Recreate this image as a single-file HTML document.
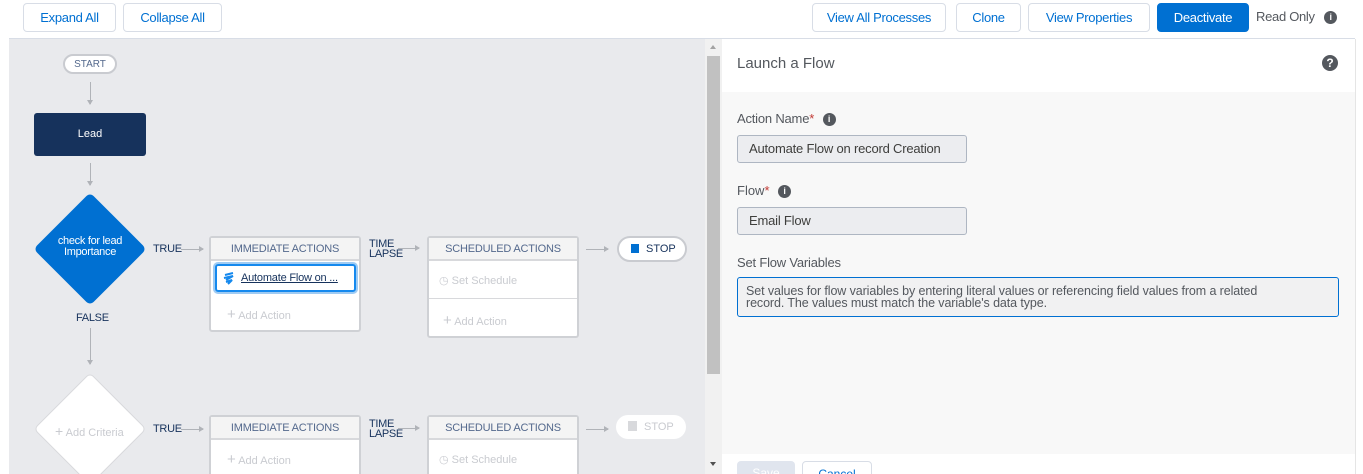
<!DOCTYPE html>
<html style="width:1363px;height:474px;overflow:hidden"><head><meta charset="utf-8"><style>
*{box-sizing:border-box;margin:0;padding:0}
body{width:1363px;height:474px;overflow:hidden;background:#fff;font-family:"Liberation Sans",sans-serif;position:relative;color:#3e3e3c}
.a{position:absolute}
.btn{position:absolute;top:3px;height:29px;border:1px solid #d8dde6;border-radius:4px;background:#fff;color:#0070d2;font-size:13px;line-height:27px;text-align:center;letter-spacing:-0.3px}
.box{position:absolute;background:#fff;border:2px solid #cfd1d5;border-radius:3px}
.hd{height:23px;background:#f4f4f4;border-bottom:2px solid #d8d9dc;color:#54698d;font-size:11px;text-align:center;line-height:22px;letter-spacing:-0.2px}
.lbl{position:absolute;color:#16325c;font-size:11px;letter-spacing:-0.3px}
.arr{position:absolute;height:1px;background:#b0b3b8}
.arr:after{content:"";position:absolute;right:-1px;top:-3px;border-left:5px solid #b0b3b8;border-top:3.5px solid transparent;border-bottom:3.5px solid transparent}
.varr{position:absolute;width:1px;background:#b0b3b8}
.varr:after{content:"";position:absolute;bottom:-1px;left:-3px;border-top:5px solid #b0b3b8;border-left:3.5px solid transparent;border-right:3.5px solid transparent}
.grey{color:#c9cbd0;font-size:11px}
.fld{position:absolute;left:737px;width:230px;height:28px;background:#ecedf0;border:1px solid #aeb6c2;border-radius:3px;font-size:13px;line-height:26px;padding-left:11px;color:#3e3e3c;letter-spacing:-0.2px}
.info{display:inline-block;width:13px;height:13px;border-radius:50%;background:#54585e;color:#fff;font-size:9px;font-weight:bold;text-align:center;line-height:13px;vertical-align:middle}
</style></head><body>
<div class="btn" style="left:23px;width:93px">Expand All</div>
<div class="btn" style="left:123px;width:99px">Collapse All</div>
<div class="btn" style="left:812px;width:134px">View All Processes</div>
<div class="btn" style="left:956px;width:65px">Clone</div>
<div class="btn" style="left:1028px;width:122px">View Properties</div>
<div class="btn" style="left:1157px;width:92px;background:#0070d2;border-color:#0070d2;color:#fff">Deactivate</div>
<div class="a" style="left:1256px;top:9px;font-size:13px;color:#54585e;letter-spacing:-0.3px">Read Only <span class="info" style="margin-left:6px">i</span></div>
<div class="a" style="left:9px;top:38px;width:1346px;height:1px;background:#d8dde6"></div>

<div class="a" style="left:9px;top:39px;width:696px;height:435px;background:#e9eaed"></div>
<div class="a" style="left:705px;top:39px;width:17px;height:435px;background:#f1f1f1"></div>
<div class="a" style="left:707px;top:56px;width:13px;height:318px;background:#c1c1c1"></div>
<div class="a" style="left:710px;top:45px;border-bottom:4px solid #a3a3a3;border-left:3.5px solid transparent;border-right:3.5px solid transparent"></div>
<div class="a" style="left:710px;top:462px;border-top:4px solid #505050;border-left:3.5px solid transparent;border-right:3.5px solid transparent"></div>

<div class="a" style="left:63px;top:54px;width:54px;height:20px;border:2px solid #c9cbd0;background:#fff;border-radius:10px;font-size:10px;color:#54698d;text-align:center;line-height:17px">START</div>
<div class="varr" style="left:90px;top:82px;height:22px"></div>
<div class="a" style="left:34px;top:113px;width:112px;height:43px;background:#16325c;border-radius:3px;color:#fff;font-size:11px;text-align:center;line-height:43px">Lead</div>
<div class="varr" style="left:90px;top:163px;height:22px"></div>

<div class="a" style="left:50px;top:209px;width:80px;height:80px;background:#0070d2;border-radius:5px;transform:rotate(45deg)"></div>
<div class="a" style="left:40px;top:236px;width:100px;text-align:center;color:#fff;font-size:11px;line-height:11px;letter-spacing:-0.3px">check for lead<br>Importance</div>
<div class="lbl" style="left:153px;top:243px">TRUE</div>
<div class="arr" style="left:181px;top:249px;width:22px"></div>
<div class="lbl" style="left:76px;top:312px">FALSE</div>
<div class="varr" style="left:90px;top:328px;height:36px"></div>

<div class="box" style="left:209px;top:236px;width:152px;height:96px">
<div class="hd">IMMEDIATE ACTIONS</div>
<div class="a" style="left:4px;top:26px;width:141px;height:28px;border:2px solid #1589ee;border-radius:3px;box-shadow:0 0 0 2px #9fcbf3;font-size:11px;line-height:24px;padding-left:24px;color:#16325c;letter-spacing:-0.2px"><span style="text-decoration:underline">Automate Flow on ...</span>
<svg class="a" style="left:6px;top:6px" width="12" height="13" viewBox="0 0 12 13"><path d="M2 3 L10 1 M1 6 L10 4 L3 8 M3 10 L9 8 L5 12" stroke="#1589ee" stroke-width="2" fill="none"/></svg></div>
<div class="a grey" style="left:16px;top:68px"><span style="font-size:15px">+</span> Add Action</div>
</div>
<div class="lbl" style="left:369px;top:239px;line-height:10px">TIME<br>LAPSE</div>
<div class="arr" style="left:398px;top:248px;width:21px"></div>
<div class="box" style="left:427px;top:236px;width:152px;height:102px">
<div class="hd">SCHEDULED ACTIONS</div>
<div class="a grey" style="left:10px;top:36px">&#9719; Set Schedule</div>
<div class="a" style="left:0;top:60px;width:148px;height:1px;background:#d8d9dc"></div>
<div class="a grey" style="left:14px;top:74px"><span style="font-size:15px">+</span> Add Action</div>
</div>
<div class="arr" style="left:586px;top:249px;width:22px"></div>
<div class="a" style="left:617px;top:236px;width:70px;height:26px;border:2px solid #c9cbd0;background:#fff;border-radius:13px;font-size:11px;color:#16325c;line-height:22px;padding-left:12px"><span style="display:inline-block;width:8px;height:9px;background:#0070d2;vertical-align:-1px;margin-right:7px"></span>STOP</div>

<div class="a" style="left:50px;top:389px;width:80px;height:80px;background:#fff;border:1px solid #d8d9dc;border-radius:5px;transform:rotate(45deg)"></div>
<div class="a grey" style="left:55px;top:423px;font-size:11px"><span style="font-size:14px">+</span> Add Criteria</div>
<div class="lbl" style="left:153px;top:423px">TRUE</div>
<div class="arr" style="left:181px;top:429px;width:22px"></div>
<div class="box" style="left:209px;top:415px;width:152px;height:70px">
<div class="hd">IMMEDIATE ACTIONS</div>
<div class="a grey" style="left:16px;top:34px"><span style="font-size:15px">+</span> Add Action</div>
</div>
<div class="lbl" style="left:369px;top:419px;line-height:10px">TIME<br>LAPSE</div>
<div class="arr" style="left:398px;top:428px;width:21px"></div>
<div class="box" style="left:427px;top:415px;width:152px;height:70px">
<div class="hd">SCHEDULED ACTIONS</div>
<div class="a grey" style="left:10px;top:36px">&#9719; Set Schedule</div>
</div>
<div class="arr" style="left:586px;top:429px;width:22px"></div>
<div class="a" style="left:616px;top:415px;width:70px;height:24px;background:#fff;border-radius:12px;font-size:11px;color:#c9cbd0;line-height:24px;padding-left:12px"><span style="display:inline-block;width:9px;height:10px;background:#d8d9dc;vertical-align:-1px;margin-right:7px"></span>STOP</div>

<div class="a" style="left:722px;top:39px;width:633px;height:53px;background:#fff"></div>
<div class="a" style="left:737px;top:55px;font-size:15px;color:#54585e">Launch a Flow</div>
<div class="a" style="left:1322px;top:55px;width:16px;height:16px;border-radius:50%;background:#54585e;color:#fff;font-size:12px;font-weight:bold;text-align:center;line-height:16px">?</div>
<div class="a" style="left:722px;top:92px;width:633px;height:362px;background:#f8f8f8"></div>
<div class="a" style="left:1355px;top:39px;width:8px;height:435px;background:#fff;border-left:1px solid #e5e5e5"></div>
<div class="a" style="left:737px;top:111px;font-size:13px;color:#54585e;letter-spacing:-0.2px">Action Name<span style="color:#c23934">*</span> <span class="info" style="margin-left:5px">i</span></div>
<div class="fld" style="top:135px">Automate Flow on record Creation</div>
<div class="a" style="left:737px;top:183px;font-size:13px;color:#54585e">Flow<span style="color:#c23934">*</span> <span class="info" style="margin-left:5px">i</span></div>
<div class="fld" style="top:207px">Email Flow</div>
<div class="a" style="left:737px;top:255px;font-size:13px;color:#54585e;letter-spacing:-0.2px">Set Flow Variables</div>
<div class="a" style="left:737px;top:277px;width:602px;height:40px;background:#f1f1f2;border:1px solid #0070d2;border-radius:3px;font-size:12.5px;line-height:12px;padding:7px 0 0 8px;color:#54585e;letter-spacing:-0.1px">Set values for flow variables by entering literal values or referencing field values from a related<br>record. The values must match the variable's data type.</div>
<div class="a" style="left:737px;top:461px;width:58px;height:20px;background:#e0e5ee;border-radius:4px;color:#fff;font-size:12px;text-align:center;line-height:24px">Save</div>
<div class="a" style="left:802px;top:461px;width:70px;height:20px;border:1px solid #d8dde6;border-radius:4px;color:#0070d2;font-size:12px;text-align:center;line-height:24px">Cancel</div>
</body></html>
